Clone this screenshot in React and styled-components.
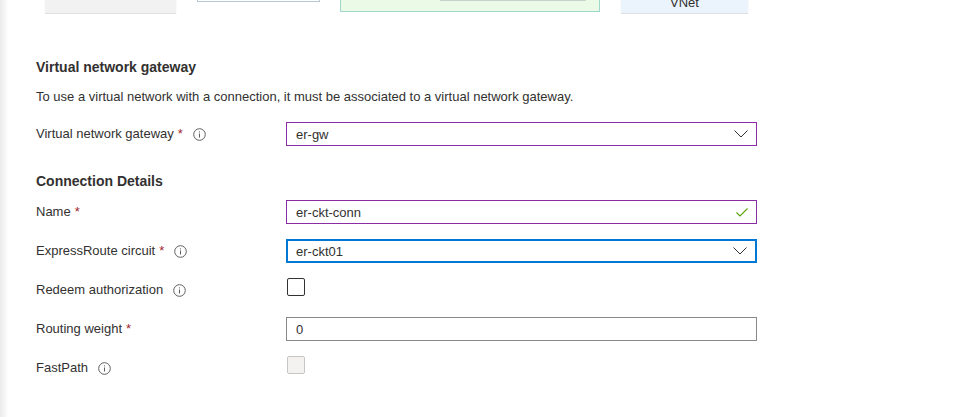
import React from 'react';
import styled, { createGlobalStyle } from 'styled-components';

const GlobalStyle = createGlobalStyle`
  html, body {
    margin: 0;
    padding: 0;
    background: #ffffff;
  }
  body {
    font-family: 'Liberation Sans', Arial, sans-serif;
    color: #323130;
  }
`;

const Page = styled.div`
  width: 956px;
  height: 417px;
  overflow: hidden;
  background: linear-gradient(to right, #ececec 0, #f6f6f6 5px, #ffffff 8px);
`;

const Diagram = styled.div`
  position: relative;
  height: 14px;
  overflow: hidden;
`;

const Node = styled.div`
  position: absolute;
  box-sizing: border-box;
  left: ${(p) => p.left}px;
  width: ${(p) => p.width}px;
  bottom: ${(p) => p.bottom}px;
  height: 40px;
  background: ${(p) => p.bg || '#ffffff'};
  border: ${(p) => p.border || 'none'};
  box-shadow: ${(p) => (p.shadow ? '0 1px 1px rgba(0, 0, 0, 0.12)' : 'none')};
  display: flex;
  align-items: flex-end;
  justify-content: center;
  font-size: 13px;
  line-height: 16px;
  padding-bottom: 2px;
  color: #323130;
`;

const Content = styled.div`
  padding: 43px 0 0 36px;
`;

const SectionTitle = styled.div`
  font-size: 14px;
  line-height: 20px;
  font-weight: 700;
  margin-bottom: ${(p) => p.gap}px;
`;

const Description = styled.div`
  font-size: 13px;
  line-height: 18px;
  margin-bottom: 16px;
`;

const Form = styled.div`
  display: flex;
  flex-direction: column;
  gap: 15px;
  margin-bottom: ${(p) => p.gap || 0}px;
`;

const Row = styled.div`
  display: grid;
  grid-template-columns: 250px 471px;
  align-items: ${(p) => (p.top ? 'start' : 'center')};
  min-height: 24px;
`;

const Label = styled.div`
  display: flex;
  align-items: center;
  font-size: 13px;
  line-height: 24px;
`;

const Required = styled.span`
  color: #a4262c;
  margin-left: 4px;
`;

const InfoWrap = styled.span`
  display: inline-flex;
  margin-left: 10px;
`;

const Field = styled.div`
  box-sizing: border-box;
  height: 24px;
  display: flex;
  align-items: center;
  justify-content: space-between;
  padding: 0 8px 0 9px;
  font-size: 13px;
  border: ${(p) => (p.focused ? '2px' : '1px')} solid ${(p) => p.color || '#8a8886'};
  padding-left: ${(p) => (p.focused ? 8 : 9)}px;
  background: #ffffff;
`;

const Checkbox = styled.div`
  box-sizing: border-box;
  width: 18px;
  height: 18px;
  border-radius: 2px;
  margin-left: 1px;
  border: 1px solid ${(p) => (p.disabled ? '#c8c6c4' : '#323130')};
  background: ${(p) => (p.disabled ? '#f3f2f1' : '#ffffff')};
`;

const InfoIcon = () => (
  <svg width="13" height="13" viewBox="0 0 13 13">
    <circle cx="6.5" cy="6.5" r="5.8" fill="none" stroke="#605e5c" strokeWidth="1" />
    <rect x="6" y="5.5" width="1" height="4" fill="#605e5c" />
    <rect x="6" y="3.4" width="1" height="1" fill="#605e5c" />
  </svg>
);

const Chevron = () => (
  <svg width="14" height="8" viewBox="0 0 14 8">
    <path d="M0.5 0.5 L7 7 L13.5 0.5" fill="none" stroke="#323130" strokeWidth="1" />
  </svg>
);

const Check = () => (
  <svg width="12" height="9" viewBox="0 0 12 9">
    <path d="M0.5 4.5 L4 8 L11.5 0.5" fill="none" stroke="#57a300" strokeWidth="1.1" />
  </svg>
);

const FieldLabel = ({ text, required, info }) => (
  <Label>
    {text}
    {required && <Required>*</Required>}
    {info && (
      <InfoWrap>
        <InfoIcon />
      </InfoWrap>
    )}
  </Label>
);

const App = () => {
  return (
    <Page>
      <GlobalStyle />
      <Diagram>
        <Node left={45} width={131} bottom={1} bg="#f2f2f2" shadow />
        <Node left={197} width={123} bottom={12} border="1px solid #b7c7d5" />
        <Node left={340} width={260} bottom={2} bg="#ebf9e7" border="1px solid #9ed8ca" />
        <Node left={440} width={146} bottom={13} bg="#f2f2f2" border="1px solid #c5d3cc" />
        <Node left={621} width={127} bottom={1} bg="#ebf3fc" shadow>
          VNet
        </Node>
      </Diagram>
      <Content>
        <SectionTitle gap={11}>Virtual network gateway</SectionTitle>
        <Description>
          To use a virtual network with a connection, it must be associated to a virtual network gateway.
        </Description>
        <Form gap={25}>
          <Row>
            <FieldLabel text="Virtual network gateway" required info />
            <Field color="#8a2da5">
              er-gw
              <Chevron />
            </Field>
          </Row>
        </Form>
        <SectionTitle gap={9}>Connection Details</SectionTitle>
        <Form>
          <Row>
            <FieldLabel text="Name" required />
            <Field color="#8a2da5">
              er-ckt-conn
              <Check />
            </Field>
          </Row>
          <Row>
            <FieldLabel text="ExpressRoute circuit" required info />
            <Field color="#0078d4" focused>
              er-ckt01
              <Chevron />
            </Field>
          </Row>
          <Row top>
            <FieldLabel text="Redeem authorization" info />
            <Checkbox />
          </Row>
          <Row>
            <FieldLabel text="Routing weight" required />
            <Field>0</Field>
          </Row>
          <Row top>
            <FieldLabel text="FastPath" info />
            <Checkbox disabled />
          </Row>
        </Form>
      </Content>
    </Page>
  );
};

export default App;
